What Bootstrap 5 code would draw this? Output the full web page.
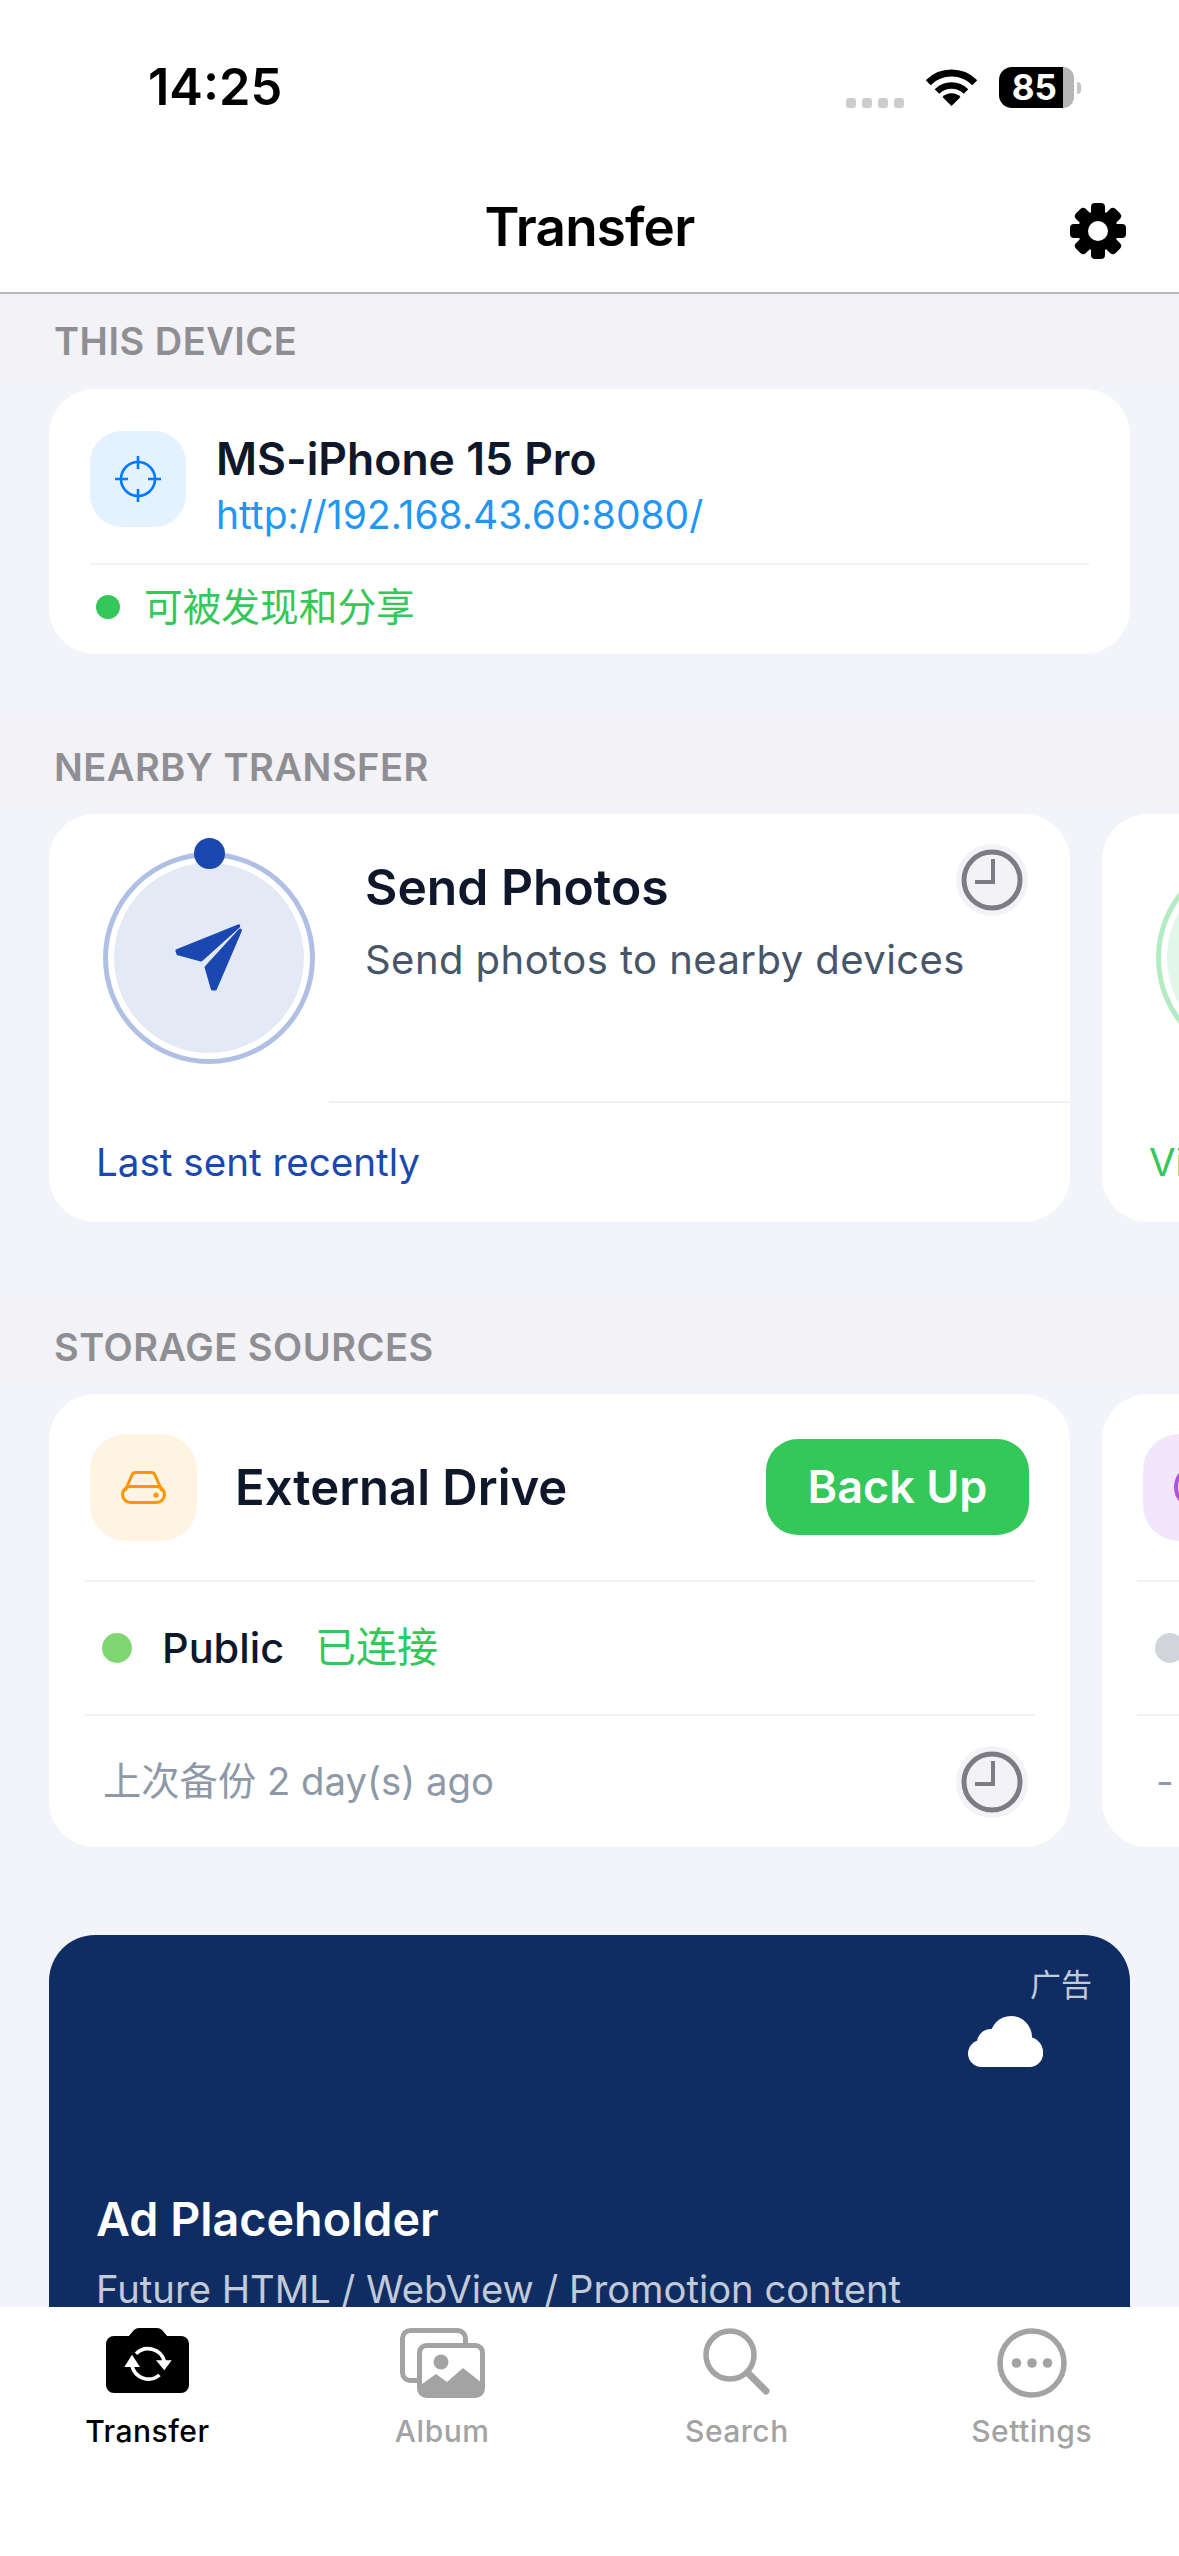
<!DOCTYPE html>
<html>
<head>
    <title>Transfer</title>
    <meta charset="utf-8">
    <meta name="viewport" content="width=device-width, initial-scale=1">
    <link href="https://cdn.jsdelivr.net/npm/bootstrap@5.3.3/dist/css/bootstrap.min.css" rel="stylesheet">
    <script src="https://cdn.jsdelivr.net/npm/bootstrap@5.3.3/dist/js/bootstrap.bundle.min.js"></script>
    <style>
        html, body {height: 100%; margin: 0;}
        body {font-family: Inter, "Noto Sans CJK SC", sans-serif; background: #f2f4fa; color: #0f172a; overflow: hidden;}
        .phone {height: 2556px;}

        .top-bar {height: 294px; border-bottom: 2px solid #b6b6ba; flex: none;}
        .status-row {height: 175px; padding: 0 98px 0 148px;}
        .clock-text {font-size: 50.5px; font-weight: 600; color: #000; line-height: 1;}
        .signal-dot {width: 10px; height: 10px; border-radius: 3px; background: #cdcdcd;}
        .signal-dots {gap: 6px; margin-top: 30px; margin-right: 22px;}
        .batt {width: 75px; height: 41px; margin-left: 22px;}
        .batt-fill {flex: 1; background: #000; color: #fff; font-size: 35px; font-weight: 700; line-height: 41px; text-align: right; padding-right: 6px; border-radius: 13px 0 0 13px;}
        .batt-rest {width: 11px; background: #b5b5b5; border-radius: 0 13px 13px 0;}
        .batt-nub {width: 4px; height: 12px; background: #c4c4c4; border-radius: 0 6px 6px 0; margin-left: 3px;}
        .nav-row {height: 118px; padding: 0 53px 14px; display: grid; grid-template-columns: 1fr auto 1fr; align-items: center;}
        .nav-title {font-size: 53px; font-weight: 600; color: #000; line-height: 1; letter-spacing: -.8px;}
        .gear {justify-self: end; margin-top: 8px;}

        .page-main {flex: 1; min-height: 0; overflow: hidden;}
        .sec-band {background: #f2f2f7; padding: 27px 0 0 54px; color: #8e8e93; font-size: 38px; font-weight: 600; line-height: 44px; letter-spacing: .5px;}
        .band-a {height: 86px; padding-top: 25px; margin-bottom: 9px;}
        .band-b {height: 87px; margin-top: 64px; margin-bottom: 9px;}
        .band-c {height: 83px; margin-top: 76px; margin-bottom: 13px;}

        .sheet {background: #fff; border-radius: 46px;}
        .device-sheet {margin: 0 49px; height: 265px; padding: 42px 41px 0;}
        .ico-box {width: 96px; height: 96px; border-radius: 32px; background: #e3f2fe;}
        .dev-info {margin-left: 6px; padding-top: 2px;}
        .dev-name {font-size: 44.5px; font-weight: 600; line-height: 52px;}
        .dev-url {font-size: 39px; line-height: 48px; color: #2196f3; margin-top: 6px;}
        .thin-line {height: 2px; background: #f1f1f6;}
        .dev-top {height: 132px; align-items: flex-start;}
        .dev-state {height: 84px; color: #34c759; font-size: 38.7px; padding-left: 6px;}
        .state-dot {width: 24px; height: 24px; border-radius: 50%; background: #34c759; margin-right: 24px;}

        .scroll-row {padding-left: 49px; gap: 32px; width: 3000px;}
        .near-sheet {width: 1021px; height: 408px; flex: none;}
        .near-top {height: 287px; padding: 30px 42px 0 54px;}
        .ring {width: 212px; height: 212px; border-radius: 50%; border: 5px solid #afc0e4; margin-top: 8px; position: relative; flex: none; padding: 6px;}
        .ring-fill {width: 100%; height: 100%; border-radius: 50%; background: #e3e9f5;}
        .ring-dot {position: absolute; width: 31px; height: 31px; border-radius: 50%; background: #1a47b0; top: -19px; left: 86px;}
        .ring.green {border-color: #b3ebc3;}
        .ring.green .ring-fill {background: #e3f7e9;}
        .plane-ico {margin: 0 3px 2px 0;}
        .near-text {margin-left: 50px; flex: 1; min-width: 0;}
        .near-title {font-size: 49.8px; font-weight: 600; line-height: 60px; margin-top: 13px;}
        .near-desc {font-size: 40px; line-height: 48px; color: #475569; margin-top: 19px; white-space: nowrap; letter-spacing: .45px;}
        .near-line {margin-left: 280px;}
        .near-foot {height: 119px; padding-left: 47px; font-size: 38.6px; color: #1a47b0;}
        .near-foot.go {color: #34c759;}

        .store-sheet {width: 1021px; height: 453px; flex: none; padding: 0 35px;}
        .store-top {height: 186px; padding: 0 6px;}
        .store-ico {width: 107px; height: 107px; border-radius: 36px; background: #fff3e2; flex: none;}
        .store-ico.violet {background: #f3e6fa;}
        .store-name {font-size: 49px; font-weight: 600; margin: 2px 0 0 38px;}
        .backup-btn {background: #34c759; color: #fff; font-size: 45px; font-weight: 600; width: 263px; height: 96px; border-radius: 32px; border: 0; padding: 0;}
        .store-mid {height: 132px; padding-left: 18px;}
        .store-dot {width: 30px; height: 30px; border-radius: 50%; background: #80d672; margin-right: 30px;}
        .store-dot.off {background: #d1d5db;}
        .store-pub {font-size: 41.5px; font-weight: 500; margin-right: 31px;}
        .store-ok {font-size: 41px; color: #34c759;}
        .store-foot {height: 132px; padding: 0 7px 0 19px; font-size: 38.3px; color: #8e99a8;}

        .ad-sheet {margin: 88px 49px 0; height: 520px; background: #0f2d63; border-radius: 46px; padding: 30px 38px 0 47px; color: #fff;}
        .ad-mark {font-size: 31px; line-height: 40px; text-align: right; color: rgba(255,255,255,.75);}
        .ad-cloud {margin: 11px 49px 0 0;}
        .ad-title {font-size: 46.7px; font-weight: 600; line-height: 56px; margin-top: 124px;}
        .ad-desc {font-size: 38.2px; line-height: 48px; margin-top: 18px; color: rgba(255,255,255,.75); white-space: nowrap;}

        .tab-bar {height: 249px; flex: none; padding-top: 21px; background: #fff;}
        .tab-cell {width: 25%; color: #a3a3a3; font-size: 30px; font-weight: 500; letter-spacing: .5px;}
        .tab-cell.on {color: #000;}
        .tab-ico {height: 70px; margin-bottom: 13px;}
        .tab-label {line-height: 40px;}
    </style>
</head>
<body>
<div class="phone d-flex flex-column">

    <div class="top-bar bg-white">
        <div class="status-row d-flex align-items-center">
            <span class="clock-text">14:25</span>
            <div class="ms-auto d-flex align-items-center">
                <div class="signal-dots d-flex">
                    <span class="signal-dot"></span><span class="signal-dot"></span><span class="signal-dot"></span><span class="signal-dot"></span>
                </div>
                <svg width="51" height="37" viewBox="0 0 51 37" fill="none" stroke="#000">
                    <path d="M2.2 13.7A33 33 0 0 1 48.8 13.7" stroke-width="7"/>
                    <path d="M11 22.5A20.5 20.5 0 0 1 40 22.5" stroke-width="6.5"/>
                    <path d="M25.5 37L16.5 28A12.7 12.7 0 0 1 34.5 28Z" fill="#000" stroke="none"/>
                </svg>
                <div class="batt d-flex">
                    <div class="batt-fill">85</div>
                    <div class="batt-rest"></div>
                </div>
                <div class="batt-nub"></div>
            </div>
        </div>
        <div class="nav-row">
            <span></span>
            <span class="nav-title">Transfer</span>
            <svg class="gear" width="56" height="56" viewBox="-28 -28 56 56" fill="#000">
                <circle r="20"/>
                <rect x="-7" y="-28" width="14" height="14" rx="4"/>
                <rect x="-7" y="-28" width="14" height="14" rx="4" transform="rotate(45)"/>
                <rect x="-7" y="-28" width="14" height="14" rx="4" transform="rotate(90)"/>
                <rect x="-7" y="-28" width="14" height="14" rx="4" transform="rotate(135)"/>
                <rect x="-7" y="-28" width="14" height="14" rx="4" transform="rotate(180)"/>
                <rect x="-7" y="-28" width="14" height="14" rx="4" transform="rotate(225)"/>
                <rect x="-7" y="-28" width="14" height="14" rx="4" transform="rotate(270)"/>
                <rect x="-7" y="-28" width="14" height="14" rx="4" transform="rotate(315)"/>
                <circle r="10" fill="#fff"/>
            </svg>
        </div>
    </div>

    <div class="page-main">
        <div class="sec-band band-a">THIS DEVICE</div>
        <div class="sheet device-sheet">
            <div class="dev-top d-flex">
                <div class="ico-box d-flex align-items-center justify-content-center me-4 flex-shrink-0">
                    <svg width="46" height="46" viewBox="0 0 46 46" fill="none" stroke="#007aff" stroke-width="2.6">
                        <circle cx="23" cy="23" r="17"/>
                        <path d="M23 0V13M23 33V46M0 23H13M33 23H46"/>
                    </svg>
                </div>
                <div class="dev-info">
                    <div class="dev-name">MS-iPhone 15 Pro</div>
                    <div class="dev-url">http://192.168.43.60:8080/</div>
                </div>
            </div>
            <div class="thin-line"></div>
            <div class="dev-state d-flex align-items-center"><span class="state-dot"></span>可被发现和分享</div>
        </div>

        <div class="sec-band band-b">NEARBY TRANSFER</div>
        <div class="scroll-row d-flex">
            <div class="sheet near-sheet">
                <div class="near-top d-flex">
                    <div class="ring">
                        <div class="ring-fill d-flex align-items-center justify-content-center">
                            <svg class="plane-ico" width="72" height="72" viewBox="280 305 210 210" fill="#1a47b0" stroke="#1a47b0" stroke-width="10" stroke-linejoin="round">
                                <path d="M295 392L474 320L365 418L298 400Z"/>
                                <path d="M479 332L406 503L398 503L380 440Z"/>
                            </svg>
                        </div>
                        <span class="ring-dot"></span>
                    </div>
                    <div class="near-text">
                        <div class="d-flex justify-content-between align-items-start">
                            <div class="near-title">Send Photos</div>
                            <svg width="72" height="72" viewBox="0 0 72 72" fill="none" stroke="#7c7c84" stroke-width="5">
                                <circle cx="36" cy="36" r="36" fill="#f2f2f7" stroke="none"/>
                                <circle cx="36" cy="36" r="28"/>
                                <path d="M37 15V38H19" stroke-width="4"/>
                            </svg>
                        </div>
                        <div class="near-desc">Send photos to nearby devices</div>
                    </div>
                </div>
                <div class="thin-line near-line"></div>
                <div class="near-foot d-flex align-items-center">Last sent recently</div>
            </div>
            <div class="sheet near-sheet">
                <div class="near-top d-flex">
                    <div class="ring green"><div class="ring-fill"></div></div>
                </div>
                <div class="thin-line near-line"></div>
                <div class="near-foot go d-flex align-items-center">View received</div>
            </div>
        </div>

        <div class="sec-band band-c">STORAGE SOURCES</div>
        <div class="scroll-row d-flex">
            <div class="sheet store-sheet">
                <div class="store-top d-flex align-items-center">
                    <div class="store-ico d-flex align-items-center justify-content-center">
                        <svg width="45" height="33" viewBox="0 0 45 33" fill="none" stroke="#ff9500" stroke-width="3">
                            <rect x="1.5" y="15.5" width="42" height="16" rx="8"/>
                            <path d="M4 20L11 4Q12 1.5 15 1.5H30Q33 1.5 34 4L41 20"/>
                            <circle cx="35" cy="24" r="2.6" fill="#ff9500" stroke="none"/>
                        </svg>
                    </div>
                    <div class="store-name">External Drive</div>
                    <button class="backup-btn btn ms-auto">Back Up</button>
                </div>
                <div class="thin-line"></div>
                <div class="store-mid d-flex align-items-center">
                    <span class="store-dot"></span><span class="store-pub">Public</span><span class="store-ok">已连接</span>
                </div>
                <div class="thin-line"></div>
                <div class="store-foot d-flex align-items-center justify-content-between">
                    <span>上次备份 2 day(s) ago</span>
                    <svg width="72" height="72" viewBox="0 0 72 72" fill="none" stroke="#7c7c84" stroke-width="5">
                        <circle cx="36" cy="36" r="36" fill="#f2f2f7" stroke="none"/>
                        <circle cx="36" cy="36" r="28"/>
                        <path d="M37 15V38H19" stroke-width="4"/>
                    </svg>
                </div>
            </div>
            <div class="sheet store-sheet">
                <div class="store-top d-flex align-items-center">
                    <div class="store-ico violet d-flex align-items-center justify-content-center">
                        <svg width="46" height="46" viewBox="0 0 46 46" fill="none" stroke="#af52de" stroke-width="4">
                            <circle cx="23" cy="23" r="21"/>
                        </svg>
                    </div>
                </div>
                <div class="thin-line"></div>
                <div class="store-mid d-flex align-items-center"><span class="store-dot off"></span></div>
                <div class="thin-line"></div>
                <div class="store-foot d-flex align-items-center"><span>-</span></div>
            </div>
        </div>

        <div class="ad-sheet">
            <div class="ad-mark">广告</div>
            <div class="d-flex justify-content-end">
                <svg class="ad-cloud" width="75" height="51" viewBox="0 0 75 51" fill="#fff">
                    <circle cx="43" cy="21" r="21"/>
                    <circle cx="23" cy="27" r="14"/>
                    <circle cx="60" cy="36" r="15"/>
                    <rect x="0" y="24" width="75" height="27" rx="13.5"/>
                </svg>
            </div>
            <div class="ad-title">Ad Placeholder</div>
            <div class="ad-desc">Future HTML / WebView / Promotion content</div>
        </div>
    </div>

    <div class="tab-bar d-flex">
        <div class="tab-cell on d-flex flex-column align-items-center">
            <div class="tab-ico">
                <svg width="83" height="65" viewBox="0 0 83 65">
                    <path d="M22 9L28 2Q30 0 33 0H51Q54 0 56 2L62 9Z" fill="#000"/>
                    <rect y="8" width="83" height="57" rx="8" fill="#000"/>
                    <g fill="none" stroke="#fff" stroke-width="3.6">
                        <path d="M30 25.7A17 17 0 0 1 58.3 33"/>
                        <path d="M53.5 47A17 17 0 0 1 26 38"/>
                    </g>
                    <path d="M50 32.3H65.7L58.3 42.3ZM18.3 39H34L26 26.7Z" fill="#fff"/>
                </svg>
            </div>
            <div class="tab-label">Transfer</div>
        </div>
        <div class="tab-cell d-flex flex-column align-items-center">
            <div class="tab-ico">
                <svg width="85" height="70" viewBox="0 0 85 70" fill="none" stroke="#a3a3a3" stroke-width="5">
                    <rect x="2.5" y="2.5" width="63" height="50" rx="8"/>
                    <rect x="19.5" y="17.5" width="63" height="50" rx="7" fill="#fff"/>
                    <circle cx="41" cy="34" r="7.5" fill="#a3a3a3" stroke="none"/>
                    <path d="M22 56L36 46L47 54L63 40L82 55V66H22Z" fill="#a3a3a3" stroke="none"/>
                </svg>
            </div>
            <div class="tab-label">Album</div>
        </div>
        <div class="tab-cell d-flex flex-column align-items-center">
            <div class="tab-ico">
                <svg width="68" height="68" viewBox="0 0 68 68" fill="none" stroke="#a3a3a3">
                    <circle cx="27" cy="27" r="24" stroke-width="5.5"/>
                    <path d="M46 46L63 63" stroke-width="7" stroke-linecap="round"/>
                </svg>
            </div>
            <div class="tab-label">Search</div>
        </div>
        <div class="tab-cell d-flex flex-column align-items-center">
            <div class="tab-ico">
                <svg width="70" height="70" viewBox="0 0 70 70" fill="none" stroke="#a3a3a3" stroke-width="5.5">
                    <circle cx="35" cy="35" r="32"/>
                    <g fill="#a3a3a3" stroke="none">
                        <circle cx="19.5" cy="35" r="4.8"/><circle cx="35" cy="35" r="4.8"/><circle cx="50.5" cy="35" r="4.8"/>
                    </g>
                </svg>
            </div>
            <div class="tab-label">Settings</div>
        </div>
    </div>
</div>
</body>
</html>
